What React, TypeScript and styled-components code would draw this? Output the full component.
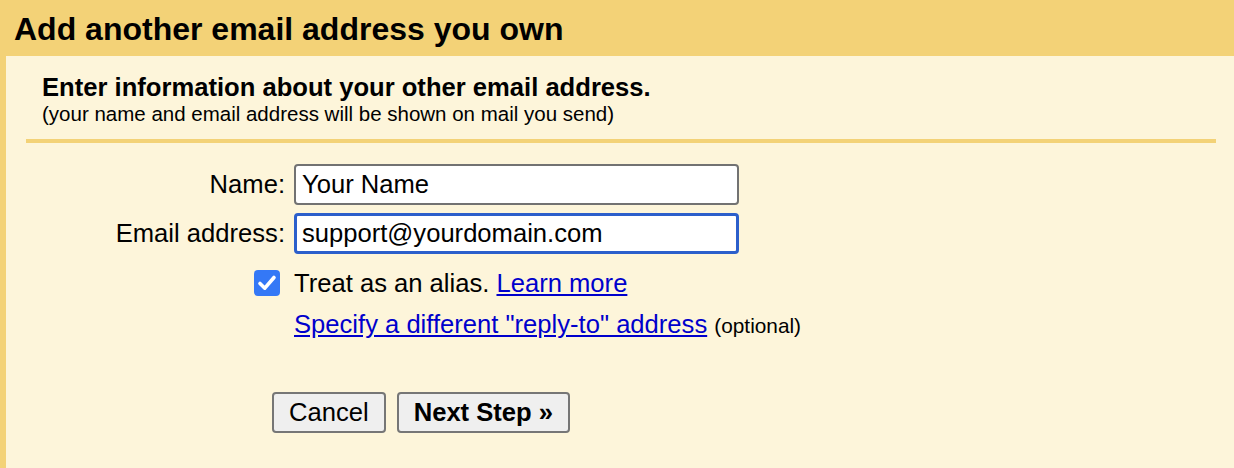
import React from 'react';
import styled, { createGlobalStyle } from 'styled-components';

const GlobalStyle = createGlobalStyle`
  html, body {
    margin: 0;
    padding: 0;
    background: #fdf5da;
    font-family: "Liberation Sans", Arial, sans-serif;
    color: #000;
  }
`;

const Page = styled.div`
  min-height: 100vh;
  display: flex;
  flex-direction: column;
  background: #fdf5da;
`;

const Header = styled.div`
  height: 56px;
  background: #f3d277;
  display: flex;
  align-items: center;
  padding-left: 14px;
`;

const HeaderTitle = styled.h1`
  margin: 0;
  font-size: 32px;
  font-weight: 700;
  line-height: 1;
  padding-top: 2px;
`;

const Body = styled.div`
  flex: 1;
  border-left: 6px solid #f3d277;
  padding: 17px 18px 0 20px;
`;

const Intro = styled.div`
  padding: 0 0 13px 16px;
  border-bottom: 4px solid #f3d277;
`;

const IntroTitle = styled.div`
  font-size: 25.6px;
  font-weight: 700;
  line-height: 29px;
`;

const IntroNote = styled.div`
  font-size: 20.5px;
  line-height: 24px;
`;

const Form = styled.div`
  display: flex;
  flex-direction: column;
  padding-top: 21px;
`;

const Row = styled.div<{ $top?: number; $height: number }>`
  display: grid;
  grid-template-columns: 259px 445px;
  column-gap: 9px;
  align-items: center;
  height: ${(p) => p.$height}px;
  margin-top: ${(p) => p.$top ?? 0}px;
`;

const Label = styled.label`
  justify-self: end;
  font-size: 25.6px;
  line-height: 29px;
`;

const Input = styled.input<{ $focused?: boolean }>`
  box-sizing: border-box;
  width: 100%;
  height: 100%;
  margin: 0;
  font-family: "Liberation Sans", Arial, sans-serif;
  font-size: 25.6px;
  color: #000;
  background: #fff;
  border-radius: 4px;
  outline: none;
  border: ${(p) => (p.$focused ? '3px solid #2c5fcb' : '2px solid #727272')};
  padding: 0 0 0 ${(p) => (p.$focused ? 5 : 6)}px;
`;

const CheckCell = styled.div`
  justify-self: end;
  margin-right: 5px;
  width: 26px;
  height: 26px;
  border-radius: 4px;
  background: #3478f6;
  display: flex;
  align-items: center;
  justify-content: center;
`;

const Text = styled.span`
  font-size: 25.6px;
  line-height: 29px;
  white-space: nowrap;
`;

const Link = styled.a`
  color: #0000cc;
  text-decoration: underline;
  cursor: pointer;
`;

const Small = styled.span`
  font-size: 20.8px;
`;

const Buttons = styled.div`
  display: flex;
  gap: 11px;
  padding-left: 246px;
  margin-top: 47px;
`;

const Button = styled.button<{ $primary?: boolean }>`
  box-sizing: border-box;
  height: 41px;
  margin: 0;
  padding: 0 15px;
  font-family: "Liberation Sans", Arial, sans-serif;
  font-size: 25.6px;
  font-weight: ${(p) => (p.$primary ? 700 : 400)};
  color: #000;
  background: #efefef;
  border: 2px solid #767676;
  border-radius: 4px;
`;

export default function App() {
  return (
    <Page>
      <GlobalStyle />
      <Header>
        <HeaderTitle>Add another email address you own</HeaderTitle>
      </Header>
      <Body>
        <Intro>
          <IntroTitle>Enter information about your other email address.</IntroTitle>
          <IntroNote>(your name and email address will be shown on mail you send)</IntroNote>
        </Intro>
        <Form>
          <Row $height={41}>
            <Label>Name:</Label>
            <Input defaultValue="Your Name" />
          </Row>
          <Row $height={41} $top={8}>
            <Label>Email address:</Label>
            <Input $focused defaultValue="support@yourdomain.com" />
          </Row>
          <Row $height={40} $top={9}>
            <CheckCell>
              <svg width="26" height="26" viewBox="0 0 26 26">
                <path d="M6 13.5 L10.8 18.2 L20 7.5" fill="none" stroke="#fff" strokeWidth="3.6" strokeLinecap="round" strokeLinejoin="round" />
              </svg>
            </CheckCell>
            <Text>
              Treat as an alias. <Link>Learn more</Link>
            </Text>
          </Row>
          <Row $height={40} $top={2}>
            <span />
            <Text>
              <Link>Specify a different "reply-to" address</Link> <Small>(optional)</Small>
            </Text>
          </Row>
        </Form>
        <Buttons>
          <Button>Cancel</Button>
          <Button $primary>Next Step »</Button>
        </Buttons>
      </Body>
    </Page>
  );
}
